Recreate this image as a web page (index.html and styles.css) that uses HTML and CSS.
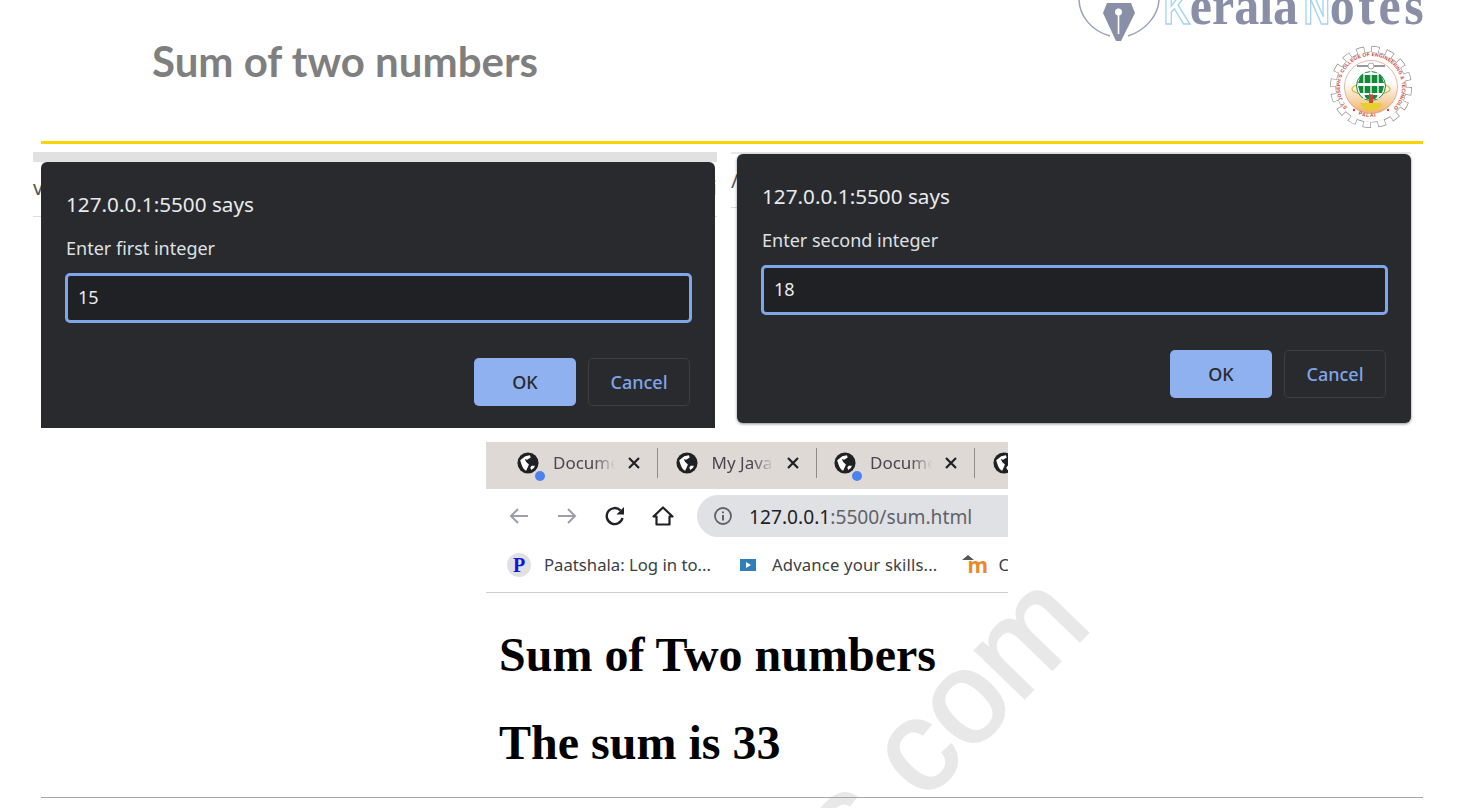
FILE: index.html
```html
<!DOCTYPE html>
<html lang="en">

<head>
  <title>Sum of two numbers</title>
  <link rel="stylesheet" href="styles.css">
</head>

<body>
  <div class="slide">
    <div class="watermark">s<span class="watermark-dot">.</span>com</div>

    <!-- logo is cut off by the top of the slide -->
    <div class="brand">
      <svg class="brand-pen" viewBox="0 0 90 44" width="90" height="44">
        <path d="M5 -4C4 16 18 31 36 36" fill="none" stroke="#9ca1b8" stroke-width="1.5"/>
        <path d="M85 -4C86 16 70 31 54 36" fill="none" stroke="#9ca1b8" stroke-width="1.5"/>
        <path d="M33 3H57L61 13L47 41H42L29 13Z" fill="#8a8fa8"/>
        <circle cx="44.500" cy="12" r="3.500" fill="#fff"/>
        <path d="M43.700 13H45.300V34H43.700Z" fill="#fff"/>
      </svg>
      <div class="brand-name"><span class="brand-hollow">K</span>erala<span class="brand-hollow brand-hollow-n">N</span><span class="brand-end">otes</span></div>
    </div>

    <svg class="seal" viewBox="0 0 84 84" width="84" height="84">
      <defs>
        <linearGradient id="sealfill" x1="0" y1="0" x2="0" y2="1">
          <stop offset="0.42" stop-color="#fff"/>
          <stop offset="1" stop-color="#efb264"/>
        </linearGradient>
        <path id="sealtop" d="M18.600 62.300A31 31 0 1 1 65.400 62.300"/>
        <path id="sealbottom" d="M27 68A30 30 0 0 0 57 68"/>
      </defs>
      <!-- gear: grey teeth and disc, then the same in white a bit smaller -->
      <circle cx="42" cy="42" r="37.500" fill="none" stroke="#8f8f8f" stroke-width="7" stroke-dasharray="8 6.726"/>
      <circle cx="42" cy="42" r="35.600" fill="#8f8f8f"/>
      <circle cx="42" cy="42" r="37.500" fill="none" stroke="#fff" stroke-width="5.600" stroke-dasharray="6.800 7.926" stroke-dashoffset="-0.600"/>
      <circle cx="42" cy="42" r="35" fill="#fff"/>
      <circle cx="42" cy="42" r="26.500" fill="url(#sealfill)" stroke="#c9897c" stroke-width="0.600"/>
      <text class="seal-text"><textPath href="#sealtop" textLength="150" lengthAdjust="spacing">ST. JOSEPH'S COLLEGE OF ENGINEERING &amp; TECHNOLOGY</textPath></text>
      <text class="seal-text seal-place"><textPath href="#sealbottom" startOffset="8%">PALAI</textPath></text>
      <circle cx="25" cy="65" r="1.200" fill="#c9463c"/>
      <circle cx="59" cy="65" r="1.200" fill="#c9463c"/>
      <path d="M28 21H39M45 21H56" stroke="#9a9a9a" stroke-width="2"/>
      <circle cx="42" cy="21" r="3" fill="#fff" stroke="#888" stroke-width="0.700"/>
      <ellipse cx="42" cy="44" rx="19" ry="6" fill="none" stroke="#d8b72c" stroke-width="1.200"/>
      <circle cx="42" cy="41" r="14.500" fill="#fff" stroke="#188a3c" stroke-width="1"/>
      <path d="M32 30H52L55 38H29ZM29 41H55L53 48H31ZM34 50H50L46 54H38Z" fill="#128a38"/>
      <path d="M42 26V56M35 27V54M49 27V54" stroke="#fff" stroke-width="1.300"/>
      <path d="M40 48C42 50 44 50 44 48V58H40Z" fill="#c9463c"/>
      <path d="M31 58H53C51 63 47 65 42 65C37 65 33 63 31 58Z" fill="#e8cf2c"/>
    </svg>

    <header class="slide-head">
      <h1 class="slide-title">Sum of two numbers</h1>
    </header>
    <div class="rule-yellow"></div>

    <div class="shots">
      <div class="shot shot-first">
        <span class="peek peek-left">v</span>
        <span class="peek peek-right">i</span>
        <span class="peek-line"></span>
        <div class="dialog dialog-cut">
          <div class="dialog-title">127.0.0.1:5500 says</div>
          <div class="dialog-msg">Enter first integer</div>
          <div class="dialog-input">15</div>
          <div class="dialog-btns">
            <div class="btn btn-ok">OK</div>
            <div class="btn btn-cancel">Cancel</div>
          </div>
        </div>
      </div>
      <div class="shot shot-second">
        <span class="peek peek-left">/</span>
        <span class="peek-line"></span>
        <div class="dialog">
          <div class="dialog-title">127.0.0.1:5500 says</div>
          <div class="dialog-msg">Enter second integer</div>
          <div class="dialog-input">18</div>
          <div class="dialog-btns">
            <div class="btn btn-ok">OK</div>
            <div class="btn btn-cancel">Cancel</div>
          </div>
        </div>
      </div>
    </div>

    <svg width="0" height="0" class="sprites">
      <symbol id="globe" viewBox="0 0 24 24">
        <circle cx="12" cy="12" r="11.500" fill="#202124"/>
        <path d="M3.500 9L9 4.500L14 3.500L15 6L11 8.500L8.500 7.500L10 11L13 13.500L12 16L10 20.500C6 18.500 5 14 3.500 9ZM16 15H19.500C19 17 17.500 18.500 15.500 19.500L14.500 17Z" fill="#fff"/>
      </symbol>
    </svg>

    <div class="browser">
      <div class="tabs">
        <div class="tab">
          <span class="tab-globe"><svg width="22" height="22"><use href="#globe"/></svg><i class="tab-dot"></i></span>
          <span class="tab-title">Document</span>
          <svg class="tab-x" viewBox="0 0 14 14" width="14" height="14"><path d="M2 2L12 12M12 2L2 12" stroke="#202124" stroke-width="2.200"/></svg>
          <i class="tab-sep"></i>
        </div>
        <div class="tab">
          <span class="tab-globe"><svg width="22" height="22"><use href="#globe"/></svg></span>
          <span class="tab-title">My Java</span>
          <svg class="tab-x" viewBox="0 0 14 14" width="14" height="14"><path d="M2 2L12 12M12 2L2 12" stroke="#202124" stroke-width="2.200"/></svg>
          <i class="tab-sep"></i>
        </div>
        <div class="tab">
          <span class="tab-globe"><svg width="22" height="22"><use href="#globe"/></svg><i class="tab-dot"></i></span>
          <span class="tab-title">Document</span>
          <svg class="tab-x" viewBox="0 0 14 14" width="14" height="14"><path d="M2 2L12 12M12 2L2 12" stroke="#202124" stroke-width="2.200"/></svg>
          <i class="tab-sep"></i>
        </div>
        <div class="tab">
          <span class="tab-globe"><svg width="22" height="22"><use href="#globe"/></svg></span>
        </div>
      </div>

      <div class="toolbar">
        <svg viewBox="0 0 24 24" width="24" height="24"><path d="M21 12H4M11 5L4 12L11 19" fill="none" stroke="#9aa0a6" stroke-width="2"/></svg>
        <svg viewBox="0 0 24 24" width="24" height="24"><path d="M3 12H20M13 5L20 12L13 19" fill="none" stroke="#9aa0a6" stroke-width="2"/></svg>
        <svg viewBox="0 0 24 24" width="24" height="24"><path d="M19.500 14A8 8 0 1 1 17.500 6.500" fill="none" stroke="#202124" stroke-width="2.400"/><path d="M21 3V10.500H13.500Z" fill="#202124"/></svg>
        <svg viewBox="0 0 24 24" width="24" height="24"><path d="M12 3.500L21.500 12.500H18.500V20.500H5.500V12.500H2.500Z" fill="none" stroke="#202124" stroke-width="2.200" stroke-linejoin="round"/></svg>
        <div class="omnibox">
          <svg viewBox="0 0 22 22" width="22" height="22"><circle cx="11" cy="11" r="8" fill="none" stroke="#5f6368" stroke-width="1.800"/><path d="M11 10V15.500M11 6.500V8.300" stroke="#5f6368" stroke-width="2"/></svg>
          <span class="url"><b class="url-host">127.0.0.1</b>:5500/sum.html</span>
        </div>
      </div>

      <div class="bookmarks">
        <span class="bm-p">P</span>
        <span class="bm-text bm-one">Paatshala: Log in to...</span>
        <svg class="bm-video" viewBox="0 0 16 12" width="16" height="12"><path d="M0 0H16V12H0Z" fill="#2f7fb8"/><path d="M6 3L11 6L6 9Z" fill="#fff"/></svg>
        <span class="bm-text bm-two">Advance your skills...</span>
        <span class="bm-moodle">m</span>
        <span class="bm-text">C</span>
      </div>
    </div>

    <div class="page-text">
      <h2 class="page-heading">Sum of Two numbers</h2>
      <h2 class="page-heading">The sum is 33</h2>
    </div>

    <div class="rule-grey"></div>
  </div>
</body>

</html>
```

FILE: styles.css
```css
html, body {
  margin: 0;
  padding: 0;
  background: #fff;
}

.slide {
  position: relative;
  isolation: isolate;
  width: 1473px;
  height: 808px;
  overflow: hidden;
  font-family: "Noto Sans", sans-serif;
}

.sprites {
  position: absolute;
}

.watermark {
  position: absolute;
  z-index: -1;
  left: 853px;
  top: 766px;
  font-family: "Liberation Sans", sans-serif;
  font-size: 130px;
  line-height: 130px;
  color: #e8e8e8;
  -webkit-text-stroke: 2.500px #e8e8e8;
  transform: rotate(-46deg);
  transform-origin: 0 110px;
  white-space: nowrap;
}

.watermark-dot {
  vertical-align: -20px;
}

/* logo top right */
.brand {
  position: absolute;
  left: 1074px;
  top: 0;
  display: flex;
}

.brand-pen {
  display: block;
}

.brand-name {
  margin-top: -23px;
  font-family: "Liberation Serif", serif;
  font-weight: bold;
  font-size: 50px;
  line-height: 60px;
  color: #8a8fa8;
  white-space: nowrap;
  transform: scaleY(1.1);
  transform-origin: 0 48px;
}

.brand-hollow {
  display: inline-block;
  margin: 0 -3px;
  font-family: "Liberation Sans", sans-serif;
  font-size: 44px;
  color: #fff;
  -webkit-text-stroke: 1.5px #a5d3f2;
  transform: scaleX(0.84);
}

.brand-hollow-n {
  margin-left: 3px;
}

.brand-end {
  letter-spacing: 3.500px;
}

.seal {
  position: absolute;
  left: 1329px;
  top: 45px;
}

.seal-text {
  font-family: "Liberation Sans", sans-serif;
  font-size: 5px;
  font-weight: bold;
  fill: #c9463c;
}

.seal-place {
  letter-spacing: 0.800px;
}

.slide-head {
  height: 141px;
  box-sizing: border-box;
  padding: 37px 0 0 152px;
}

.slide-title {
  margin: 0;
  font-family: Lato, sans-serif;
  font-size: 42px;
  line-height: 48px;
  font-weight: 700;
  color: #7f7f7f;
}

.rule-yellow {
  height: 3px;
  margin: 0 50px 0 41px;
  background: #ffd200;
}

/* the two prompt screenshots */
.shots {
  display: flex;
  margin: 8px 0 0 33px;
  gap: 14px;
}

.shot {
  position: relative;
  box-sizing: border-box;
}

.shot-first {
  width: 684px;
  height: 276px;
  padding: 10px 0 0 8px;
  background: linear-gradient(#e1e1e1 10px, #fff 10px);
}

.shot-second {
  width: 680px;
  height: 273px;
  padding: 2px 0 0 6px;
  background: linear-gradient(#e8e8e8 2px, #fff 2px);
}

.peek {
  position: absolute;
  left: 0;
  top: 24px;
  font-size: 20px;
  line-height: 24px;
  color: #555;
}

.peek-right {
  left: auto;
  right: 0;
  color: #b5794a;
}

.peek-line {
  position: absolute;
  left: 0;
  right: 0;
  top: 64px;
  height: 1px;
  background: #ddd;
}

.shot-second .peek-line {
  top: 55px;
}

.shot-second .peek {
  top: 17px;
}

.dialog {
  position: relative;
  box-sizing: border-box;
  width: 674px;
  height: 269px;
  padding: 29px 0 0 24px;
  background: #292a2d;
  border-radius: 6px;
  box-shadow: 0 1px 3px rgba(0, 0, 0, 0.45);
}

.dialog-cut {
  height: 266px;
  border-radius: 6px 6px 0 0;
  box-shadow: none;
}

.dialog-title {
  margin-left: 1px;
  font-size: 20.700px;
  line-height: 26px;
  color: #e8eaed;
}

.dialog-msg {
  margin: 19px 0 0 1px;
  font-size: 18px;
  line-height: 24px;
  color: #dfe1e5;
}

.dialog-input {
  box-sizing: border-box;
  width: 627px;
  height: 50px;
  margin-top: 13px;
  padding-left: 10px;
  border: 3px solid #7fa6e8;
  border-radius: 5px;
  background: #202124;
  color: #e8eaed;
  font-size: 18px;
  line-height: 43px;
}

.dialog-btns {
  display: flex;
  justify-content: flex-end;
  gap: 12px;
  margin: 35px 25px 0 0;
}

.btn {
  box-sizing: border-box;
  width: 102px;
  height: 48px;
  border-radius: 5px;
  font-size: 18px;
  font-weight: 500;
  line-height: 46px;
  text-align: center;
}

.btn-ok {
  background: #8fb1f0;
  color: #292a2d;
  line-height: 48px;
}

.btn-cancel {
  border: 1px solid #3c4043;
  color: #7fa6e8;
}

/* browser screenshot */
.browser {
  width: 522px;
  margin: 14px 0 0 486px;
  overflow: hidden;
  font-family: "Noto Sans", sans-serif;
}

.tabs {
  display: flex;
  align-items: center;
  box-sizing: border-box;
  height: 47px;
  padding: 0 0 5px 31px;
  background: #dfd9d5;
}

.tab {
  display: flex;
  flex: none;
  align-items: center;
  margin-right: 17.500px;
}

.tab-globe {
  position: relative;
  display: block;
  width: 22px;
  height: 22px;
}

.tab-globe svg {
  display: block;
}

.tab-dot {
  position: absolute;
  right: -6px;
  bottom: -7px;
  width: 10px;
  height: 10px;
  border-radius: 50%;
  background: #4c82ee;
}

.tab-title {
  width: 62px;
  margin: 0 12px 0 14px;
  overflow: hidden;
  font-size: 17px;
  line-height: 24px;
  color: #4a4650;
  white-space: nowrap;
  -webkit-mask-image: linear-gradient(90deg, #000 65%, transparent);
  mask-image: linear-gradient(90deg, #000 65%, transparent);
}

.tab-sep {
  width: 1px;
  height: 30px;
  margin-left: 16px;
  background: #8f8b88;
}

.toolbar {
  display: flex;
  align-items: center;
  gap: 24px;
  height: 54px;
  padding-left: 21px;
}

.toolbar > svg {
  flex: none;
}

.omnibox {
  display: flex;
  flex: 1;
  align-items: center;
  gap: 15px;
  height: 42px;
  margin-left: -2px;
  padding-left: 15px;
  border-radius: 21px 0 0 21px;
  background: #dfe1e5;
}

.url {
  font-size: 19.200px;
  color: #5f6368;
  white-space: nowrap;
}

.url-host {
  font-weight: 400;
  color: #202124;
}

.bookmarks {
  display: flex;
  align-items: center;
  box-sizing: border-box;
  height: 50px;
  padding: 0 0 6px 21px;
  border-bottom: 1px solid #d0d0d0;
}

.bm-p {
  flex: none;
  width: 24px;
  height: 24px;
  border-radius: 50%;
  background: #dfe1e5;
  color: #1414d8;
  font-family: "Liberation Serif", serif;
  font-weight: bold;
  font-size: 20px;
  line-height: 24px;
  text-align: center;
}

.bm-text {
  font-size: 16.700px;
  line-height: 24px;
  color: #3c4043;
  white-space: nowrap;
}

.bm-one {
  margin: 0 29px 0 13px;
}

.bm-video {
  flex: none;
}

.bm-two {
  margin: 0 26px 0 16px;
  letter-spacing: 0.150px;
}

.bm-moodle {
  position: relative;
  flex: none;
  width: 26px;
  margin-right: 9px;
  padding-left: 4px;
  box-sizing: border-box;
  color: #e8892c;
  font-weight: bold;
  font-size: 21px;
  line-height: 24px;
}

.bm-moodle::before {
  content: "";
  position: absolute;
  left: -1px;
  top: 2px;
  border: 6px solid transparent;
  border-top: 0;
  border-bottom: 5px solid #555;
}

/* page content under the browser */
.page-text {
  padding: 36px 0 0 499px;
}

.page-heading {
  margin: 0 0 36px;
  font-family: "Liberation Serif", serif;
  font-size: 48px;
  line-height: 52px;
  font-weight: bold;
  color: #000;
}

.rule-grey {
  height: 1px;
  margin: -8px 50px 0 41px;
  background: #a6a6a6;
}
```
